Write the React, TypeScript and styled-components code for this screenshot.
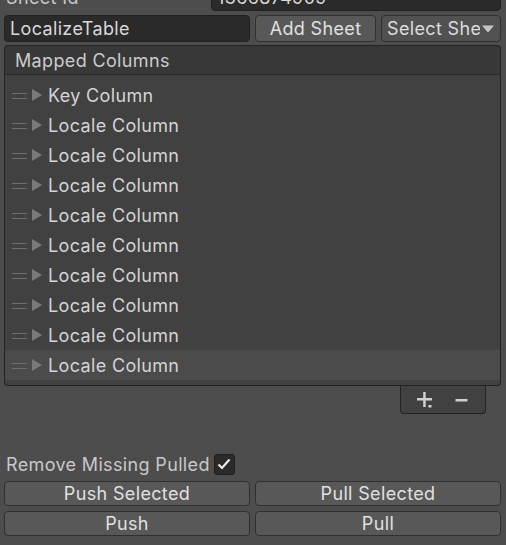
import React from "react";
import styled, { createGlobalStyle } from "styled-components";

const Global = createGlobalStyle`
  html, body { margin: 0; padding: 0; background: #4d4d4d; }
  body { font-family: Inter, "Noto Sans", sans-serif; overflow: hidden; }
  * { box-sizing: border-box; }
`;

const Page = styled.div`
  width: 506px;
  height: 545px;
  padding: 0 5px 0 4px;
  display: flex;
  flex-direction: column;
  color: #d2d2d2;
  font-size: 18px;
  letter-spacing: 0.35px;
  overflow: hidden;
`;

const SheetIdRow = styled.div`
  margin-top: -16px;
  height: 27px;
  display: grid;
  grid-template-columns: 207px 1fr;
  align-items: center;
`;

const Label = styled.span`
  padding-left: 2px;
  white-space: nowrap;
  color: #c8c8c8;
`;

const TextField = styled.div`
  height: 27px;
  background: #2a2a2a;
  border: 1px solid #212121;
  border-radius: 4px;
  padding: 0 5px;
  display: flex;
  align-items: center;
  white-space: nowrap;
  overflow: hidden;
  color: #d8d8d8;
`;

const Toolbar = styled.div`
  margin-top: 4px;
  display: grid;
  grid-template-columns: 246px 121px 120px;
  gap: 5px;
  height: 27px;
`;

const Button = styled.button<{ $h?: number }>`
  height: ${(p) => p.$h ?? 27}px;
  background: #585858;
  border: 1px solid #303030;
  border-radius: 4px;
  color: #e0e0e0;
  font: inherit;
  letter-spacing: inherit;
  padding: 0;
  display: flex;
  align-items: center;
  justify-content: center;
  white-space: nowrap;
`;

const Dropdown = styled.div`
  height: 27px;
  background: #515151;
  border: 1px solid #303030;
  border-radius: 4px;
  display: flex;
  align-items: center;
  padding: 0 6px 0 5px;
  color: #dcdcdc;
  gap: 2px;
  overflow: hidden;
`;

const DropText = styled.span`
  flex: 1;
  overflow: hidden;
  white-space: nowrap;
`;

const List = styled.div`
  margin-top: 3px;
  display: flex;
  flex-direction: column;
`;

const ListHeader = styled.div`
  height: 30px;
  background: #383838;
  border: 1px solid #232323;
  border-bottom: 1px solid #2a2a2a;
  border-radius: 4px 4px 0 0;
  display: flex;
  align-items: center;
  padding-left: 10px;
  color: #cccccc;
`;

const ListBody = styled.div`
  background: #414141;
  border: 1px solid #232323;
  border-top: none;
  border-radius: 0 0 4px 4px;
  padding: 5px 0 5px;
  display: flex;
  flex-direction: column;
`;

const Row = styled.div<{ $selected?: boolean }>`
  height: 30px;
  display: flex;
  align-items: center;
  background: ${(p) => (p.$selected ? "#4b4b4b" : "transparent")};
  padding-left: 7px;
  color: #d4d4d4;
`;

const Handle = styled.div`
  width: 15px;
  height: 6px;
  border-top: 1px solid #6e6e6e;
  border-bottom: 1px solid #6e6e6e;
  margin-right: 5px;
  margin-top: 1px;
`;

const Arrow = styled.div`
  width: 0;
  height: 0;
  border-top: 6.5px solid transparent;
  border-bottom: 6.5px solid transparent;
  border-left: 10px solid #7a7a7a;
  margin-right: 6px;
`;

const FooterWrap = styled.div`
  display: flex;
  justify-content: flex-end;
  padding-right: 15px;
`;

const Footer = styled.div`
  width: 86px;
  height: 28px;
  background: #414141;
  border: 1px solid #232323;
  border-top: none;
  border-radius: 0 0 4px 4px;
  display: flex;
  align-items: center;
  justify-content: space-between;
  padding: 0 17px 0 15px;
`;

const CheckRow = styled.div`
  margin-top: 39px;
  height: 22px;
  display: flex;
  align-items: center;
  gap: 4px;
`;

const CheckBox = styled.div`
  width: 21px;
  height: 21px;
  background: #2a2a2a;
  border: 1px solid #1f1f1f;
  border-radius: 3px;
  display: flex;
  align-items: center;
  justify-content: center;
`;

const ButtonGrid = styled.div`
  margin-top: 6px;
  display: grid;
  grid-template-columns: 1fr 1fr;
  gap: 5px;
`;

const rows = ["Key Column", ...Array(9).fill("Locale Column")];

export default function App() {
  return (
    <>
      <Global />
      <Page>
        <SheetIdRow>
          <Label>Sheet Id</Label>
          <TextField>1366874909</TextField>
        </SheetIdRow>
        <Toolbar>
          <TextField>LocalizeTable</TextField>
          <Button>Add Sheet</Button>
          <Dropdown>
            <DropText>Select Sheet</DropText>
            <svg width="12" height="8" viewBox="0 0 12 8">
              <path d="M0 0.5 L12 0.5 L6 7.5 Z" fill="#c8c8c8" />
            </svg>
          </Dropdown>
        </Toolbar>
        <List>
          <ListHeader>Mapped Columns</ListHeader>
          <ListBody>
            {rows.map((r, i) => (
              <Row key={i} $selected={i === rows.length - 1}>
                <Handle />
                <Arrow />
                <span>{r}</span>
              </Row>
            ))}
          </ListBody>
          <FooterWrap>
            <Footer>
              <svg width="20" height="20" viewBox="0 0 20 20">
                <rect x="1" y="8" width="15" height="2.5" fill="#cfcfcf" />
                <rect x="7.2" y="2" width="2.5" height="15" fill="#cfcfcf" />
                <rect x="12.5" y="15" width="3" height="2.5" fill="#cfcfcf" />
              </svg>
              <svg width="13" height="14" viewBox="0 0 13 14">
                <rect x="0.5" y="6" width="12" height="2.5" fill="#cfcfcf" />
              </svg>
            </Footer>
          </FooterWrap>
        </List>
        <CheckRow>
          <Label>Remove Missing Pulled</Label>
          <CheckBox>
            <svg width="14" height="12" viewBox="0 0 14 12">
              <path d="M1.5 6.5 L5 10 L12.5 1.5" stroke="#e8e8e8" strokeWidth="2.2" fill="none" />
            </svg>
          </CheckBox>
        </CheckRow>
        <ButtonGrid>
          <Button $h={25}>Push Selected</Button>
          <Button $h={25}>Pull Selected</Button>
          <Button $h={25}>Push</Button>
          <Button $h={25}>Pull</Button>
        </ButtonGrid>
      </Page>
    </>
  );
}
